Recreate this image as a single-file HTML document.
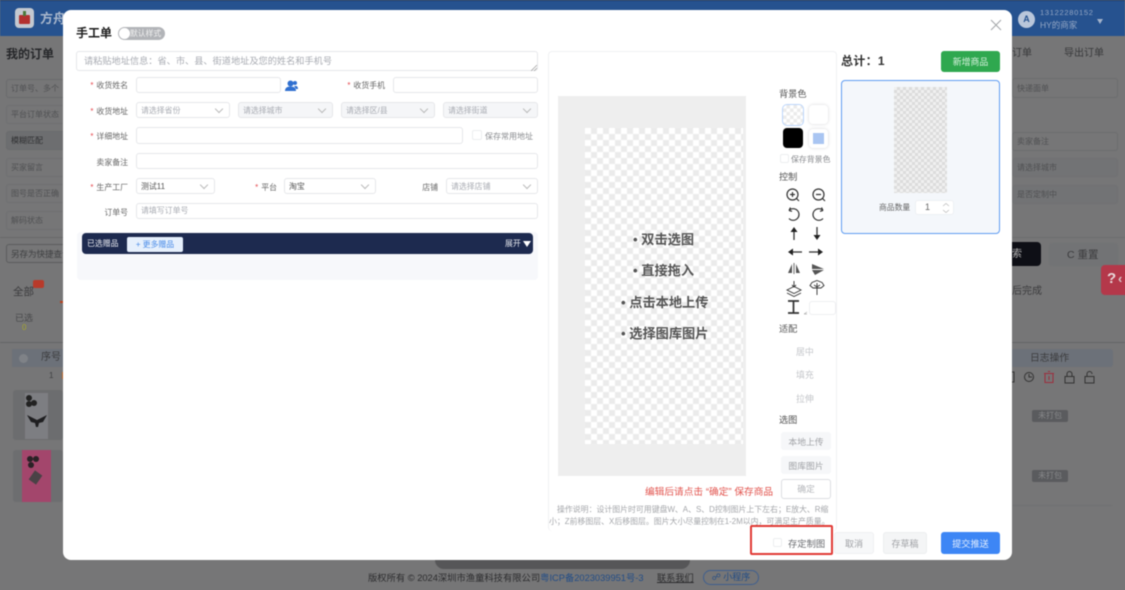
<!DOCTYPE html>
<html><head><meta charset="utf-8">
<style>
*{box-sizing:border-box}
html,body{margin:0;padding:0}
body{width:1125px;height:590px;overflow:hidden;position:relative;background:#767677;font-family:"Liberation Sans","Noto Sans CJK SC",sans-serif;color:#333}
#w{position:absolute;left:0;top:0;width:1125px;height:590px;filter:blur(.6px)}
.a,.t,.i,.s{position:absolute}
.t{white-space:nowrap;line-height:14px}
.bg{color:#3c3c3e}
.lbl{font-size:7.9px;color:#666;text-align:right;width:60px}
.lbl b{color:#e5484d;font-weight:400;margin-right:3px}
.i{border:1px solid #e6e7ea;border-radius:3px;background:#fff;font-size:7.9px;color:#a8abb2;padding-left:4px;line-height:14px;display:flex;align-items:center;white-space:nowrap}
.s{border:1px solid #e6e7ea;border-radius:3px;background:#fff;font-size:7.9px;color:#a8abb2;padding-left:4px;height:16px;display:flex;align-items:center;white-space:nowrap}
.s.dis{background:#f5f6f8}
.s:after{content:"";position:absolute;right:7px;top:3px;width:5px;height:5px;border-right:1px solid #bbb;border-bottom:1px solid #bbb;transform:rotate(45deg)}
.dk{border:1px solid #6a6b6d;border-radius:3px;position:absolute;font-size:8px;color:#505153;padding-left:4px;display:flex;align-items:center;white-space:nowrap;overflow:hidden}
.chk{background-color:#fff;background-image:linear-gradient(45deg,#ebebeb 25%,transparent 25%,transparent 75%,#ebebeb 75%),linear-gradient(45deg,#ebebeb 25%,transparent 25%,transparent 75%,#ebebeb 75%);background-size:12px 12px;background-position:0 0,6px 6px}
.btn{position:absolute;border-radius:3px;text-align:center;font-size:8.5px}
.gh{background:#f6f7f9;color:#a0a2a6}
.hint{font-size:13.2px;font-weight:700;color:#555}
</style></head><body><div id="w">

<!-- background page -->
<div class="a" style="left:0;top:0;width:1125px;height:36px;background:#26528f"></div>
<div class="a" style="left:0;top:0;width:1125px;height:1px;background:#1b3a6b"></div>
<div class="a" style="left:15px;top:8px;width:19px;height:20px;border-radius:4px;background:#c4c9d0"></div>
<div class="a" style="left:19px;top:15px;width:11px;height:9px;border-radius:1px;background:#b3312f"></div>
<div class="a" style="left:23px;top:11px;width:3px;height:5px;background:#4c7a3a"></div>
<div class="t" style="left:40px;top:12px;font-size:13px;font-weight:700;color:#a9b7cc">方舟</div>
<div class="a" style="left:1018px;top:11px;width:17px;height:17px;border-radius:50%;background:#b9c6da;color:#26528f;font-size:9px;font-weight:700;text-align:center;line-height:17px">A</div>
<div class="t" style="left:1040px;top:6px;font-size:7.5px;color:#93a6c4;letter-spacing:.7px">13122280152</div>
<div class="t" style="left:1040px;top:18px;font-size:8.5px;color:#93a6c4">HY的商家</div>
<div class="a" style="left:1097px;top:19px;width:0;height:0;border-left:3px solid transparent;border-right:3px solid transparent;border-top:5px solid #a3b3cb"></div>

<div class="t bg" style="left:6px;top:47px;font-size:12px;font-weight:700;color:#26272a">我的订单</div>
<div class="dk" style="left:6px;top:79px;width:60px;height:19px">订单号、多个</div>
<div class="dk" style="left:6px;top:105px;width:60px;height:19px;border-color:#6f7072">平台订单状态</div>
<div class="dk" style="left:6px;top:131px;width:60px;height:19px;background:#6d6e70;color:#2f3032">模糊匹配</div>
<div class="dk" style="left:6px;top:158px;width:60px;height:19px;border-color:#6f7072">买家留言</div>
<div class="dk" style="left:6px;top:184px;width:60px;height:19px;border-color:#6f7072">图号是否正确</div>
<div class="dk" style="left:6px;top:211px;width:60px;height:19px;border-color:#6f7072">解码状态</div>
<div class="a" style="left:0;top:237px;width:64px;height:1px;background:#68696b"></div>
<div class="dk" style="left:6px;top:244px;width:60px;height:19px;border-color:#5c5d5f;font-size:8.5px;color:#3f4042">另存为快捷查询</div>
<div class="t bg" style="left:13px;top:285px;font-size:10.5px">全部</div>
<div class="a" style="left:33px;top:280px;width:11px;height:8px;border-radius:2px;background:#b83a2a"></div>
<div class="a" style="left:60px;top:301px;width:4px;height:2px;background:#b8421f"></div>
<div class="t bg" style="left:15px;top:311px;font-size:9px;color:#48494b">已选</div>
<div class="t" style="left:22px;top:321px;font-size:8px;color:#a5a52f">0</div>
<div class="a" style="left:0;top:342px;width:64px;height:1px;background:#646567"></div>
<div class="a" style="left:12px;top:349px;width:52px;height:18px;background:#6c7179"></div>
<div class="a" style="left:19px;top:354px;width:9px;height:9px;border-radius:50%;background:#7f8287"></div>
<div class="t bg" style="left:41px;top:351px;font-size:10px">序号</div>
<div class="t" style="left:49px;top:369px;font-size:8px;color:#3f4042">1</div>
<div class="a" style="left:62px;top:372px;width:2px;height:7px;background:#b5642a"></div>
<div class="a" style="left:13px;top:390px;width:50px;height:50px;border-radius:3px;background:#6c6d6f"></div>
<div class="a" style="left:25px;top:393px;width:23px;height:46px;background:#7d7e82"></div>
<div class="a" style="left:26px;top:395px;width:6px;height:6px;border-radius:50%;background:#222"></div>
<div class="a" style="left:31px;top:400px;width:6px;height:6px;border-radius:50%;background:#222"></div>
<div class="a" style="left:26px;top:401px;width:6px;height:6px;border-radius:50%;background:#222"></div>
<svg class="a" style="left:27px;top:414px" width="20" height="14" fill="#1f1f21"><path d="M0 1l10 5 10-5-4 7-4 1-1 4-2 0-1-4-4-1z"/></svg>
<div class="a" style="left:13px;top:450px;width:50px;height:52px;border-radius:3px;background:#6d6e70"></div>
<div class="a" style="left:22px;top:450px;width:29px;height:52px;background:#a3466c"></div>
<div class="a" style="left:27px;top:456px;width:6px;height:6px;border-radius:50%;background:#2a2226"></div>
<div class="a" style="left:33px;top:456px;width:6px;height:6px;border-radius:50%;background:#2a2226"></div>
<div class="a" style="left:28px;top:462px;width:6px;height:6px;border-radius:50%;background:#2a2226"></div>
<div class="a" style="left:31px;top:472px;width:9px;height:11px;background:#4a4246;transform:rotate(35deg)"></div>

<div class="t bg" style="left:1012px;top:47px;font-size:10px;color:#38393b">订单</div>
<div class="t bg" style="left:1064px;top:47px;font-size:10px;color:#38393b">导出订单</div>
<div class="dk" style="left:1012px;top:78px;width:106px;height:20px;border-color:#6c6d6f">快递面单</div>
<div class="dk" style="left:1012px;top:132px;width:106px;height:19px;border-color:#6c6d6f">卖家备注</div>
<div class="dk" style="left:1012px;top:158px;width:106px;height:19px;border-color:#707173;background:#727375">请选择城市</div>
<div class="dk" style="left:1012px;top:185px;width:106px;height:19px;border-color:#707173;background:#727375">是否定制中</div>
<div class="a" style="left:1012px;top:237px;width:113px;height:1px;background:#6c6d6f"></div>
<div class="a" style="left:1012px;top:242px;width:29px;height:24px;background:#0e0f16;border-radius:0 4px 4px 0"></div>
<div class="t" style="left:1012px;top:248px;font-size:10px;color:#b5b5b5">索</div>
<div class="a" style="left:1049px;top:243px;width:69px;height:23px;background:#727375;border-radius:3px"></div>
<div class="t bg" style="left:1067px;top:248px;font-size:10.5px">C 重置</div>
<div class="a" style="left:1101px;top:265px;width:30px;height:30px;border-radius:4px;background:#b4384a"></div>
<div class="t" style="left:1107px;top:272px;font-size:15px;font-weight:700;color:#e8d8da">?</div>
<div class="t" style="left:1118px;top:272px;font-size:13px;font-weight:700;color:#d8c8ca">‹</div>
<div class="t bg" style="left:1012px;top:285px;font-size:10px">后完成</div>
<div class="a" style="left:1012px;top:342px;width:113px;height:1px;background:#646567"></div>
<div class="a" style="left:1012px;top:349px;width:101px;height:18px;background:#6c7179;border-radius:0 3px 3px 0"></div>
<div class="t bg" style="left:1030px;top:352px;font-size:9.8px">日志操作</div>
<svg class="a" style="left:1010px;top:370px" width="90" height="14" fill="none" stroke="#333" stroke-width="1">
<path d="M2 2h2v10h-2"/><circle cx="19" cy="7" r="4.500"/><path d="M19 4v3h3"/>
<path d="M35 3.500h8v9h-8zM34 3.500h10M38 1.500h2M39 6v4" stroke="#9c2e3e"/>
<path d="M55 6.500h9v6.500h-9zM57 6.500V4a2.500 2.500 0 0 1 5 0v2.500"/><path d="M75 6.500h9v6.500h-9zM77 6.500V4a2.500 2.500 0 0 1 5 0"/></svg>
<div class="a" style="left:1032px;top:410px;width:36px;height:12px;border-radius:2px;background:#5a5b5e;color:#868789;font-size:8px;text-align:center;line-height:12px">未打包</div>
<div class="a" style="left:1032px;top:470px;width:36px;height:12px;border-radius:2px;background:#5a5b5e;color:#868789;font-size:8px;text-align:center;line-height:12px">未打包</div>
<div class="a" style="left:1012px;top:505px;width:100px;height:1px;background:#707173"></div>
<div class="a" style="left:435px;top:560px;width:255px;height:9px;border-radius:0 0 9px 9px;background:#565658"></div>
<div class="t" style="left:368px;top:571px;font-size:9.300px;color:#2c2c2e">版权所有 © 2024深圳市渔童科技有限公司<span style="color:#234d86">粤ICP备2023039951号-3</span></div>
<div class="t" style="left:657px;top:571px;font-size:9.200px;color:#2c2c2e;text-decoration:underline">联系我们</div>
<div class="a" style="left:703px;top:570px;width:56px;height:15px;border:1px solid #3f5f8f;border-radius:8px;color:#234d86;font-size:9px;text-align:center;line-height:13px">&#9741; 小程序</div>

<!-- modal -->
<div class="a" style="left:63px;top:10px;width:949px;height:550px;background:#fff;border-radius:8px"></div>

<div class="t" style="left:76px;top:26px;font-size:12px;font-weight:700;color:#1f1f1f">手工单</div>
<div class="a" style="left:118px;top:27px;width:47px;height:13px;border-radius:7px;background:#b2b4b8"></div>
<div class="a" style="left:119px;top:28px;width:11px;height:11px;border-radius:50%;background:#fff"></div>
<div class="t" style="left:130px;top:27px;font-size:7.800px;color:#f2f2f2">默认样式</div>
<svg class="a" style="left:990px;top:19px" width="12" height="12" stroke="#a4a6aa" stroke-width="1"><path d="M1 1l10 10M11 1L1 11"/></svg>

<div class="i" style="left:76px;top:51px;width:462px;height:20px;font-size:9.200px;padding-left:7px">请粘贴地址信息：省、市、县、街道地址及您的姓名和手机号</div>
<svg class="a" style="left:531px;top:65px" width="6" height="6" stroke="#999" stroke-width=".7"><path d="M0 6L6 0M3 6l3-3"/></svg>

<div class="t lbl" style="left:68px;top:79px"><b>*</b>收货姓名</div>
<div class="i" style="left:136px;top:77px;width:145px;height:16px"></div>
<svg class="a" style="left:285px;top:80px" width="13" height="12" fill="#2f6fd0"><circle cx="5.500" cy="3.500" r="3"/><circle cx="10" cy="3" r="2"/><path d="M0 11c0-3 2-4.500 5.500-4.500S11 8 11 11z"/><path d="M9 6h2.500c1 .5 1.500 1.500 1.500 3h-2z"/></svg>
<div class="t lbl" style="left:325px;top:79px"><b>*</b>收货手机</div>
<div class="i" style="left:393px;top:77px;width:145px;height:16px"></div>

<div class="t lbl" style="left:68px;top:105px"><b>*</b>收货地址</div>
<div class="s" style="left:136px;top:102px;width:94px">请选择省份</div>
<div class="s dis" style="left:238px;top:102px;width:95px">请选择城市</div>
<div class="s dis" style="left:341px;top:102px;width:94px">请选择区/县</div>
<div class="s dis" style="left:443px;top:102px;width:95px">请选择街道</div>

<div class="t lbl" style="left:68px;top:130px"><b>*</b>详细地址</div>
<div class="i" style="left:136px;top:127px;width:327px;height:17px"></div>
<div class="a" style="left:472px;top:130px;width:10px;height:10px;border:1px solid #eceef0;border-radius:2px"></div>
<div class="t" style="left:485px;top:130px;font-size:8px;color:#8a8c90">保存常用地址</div>

<div class="t lbl" style="left:68px;top:156px">卖家备注</div>
<div class="i" style="left:136px;top:153px;width:402px;height:16px"></div>

<div class="t lbl" style="left:68px;top:181px"><b>*</b>生产工厂</div>
<div class="s" style="left:136px;top:178px;width:79px;color:#555">测试11</div>
<div class="t lbl" style="left:217px;top:181px"><b>*</b>平台</div>
<div class="s" style="left:284px;top:178px;width:92px;color:#555">淘宝</div>
<div class="t lbl" style="left:378px;top:181px">店铺</div>
<div class="s" style="left:446px;top:178px;width:92px">请选择店铺</div>

<div class="t lbl" style="left:68px;top:206px">订单号</div>
<div class="i" style="left:136px;top:203px;width:402px;height:16px">请填写订单号</div>

<div class="a" style="left:77px;top:232px;width:461px;height:48px;background:#f7f8fb;border-radius:4px"></div>
<div class="a" style="left:82px;top:233px;width:451px;height:21px;background:#1d2a4f;border-radius:4px"></div>
<div class="t" style="left:87px;top:237px;font-size:7.900px;color:#e6e8ee">已选赠品</div>
<div class="a" style="left:127px;top:237px;width:56px;height:15px;background:#e6f0fc;border-radius:2px;color:#4a8ce8;font-size:7.900px;text-align:center;line-height:15px">+ 更多赠品</div>
<div class="t" style="left:505px;top:237px;font-size:7.900px;color:#e6e8ee">展开</div>
<div class="a" style="left:523px;top:241px;width:0;height:0;border-left:4px solid transparent;border-right:4px solid transparent;border-top:6px solid #fff"></div>

<!-- design panel -->
<div class="a" style="left:548px;top:51px;width:289px;height:480px;border:1px solid #f0f1f3;border-bottom:none;border-radius:4px"></div>
<div class="a" style="left:558px;top:96px;width:188px;height:380px;background:#eeeeee"></div>
<div class="a chk" style="left:585px;top:128px;width:158px;height:316px"></div>
<div class="t hint" style="left:633px;top:233px">• 双击选图</div>
<div class="t hint" style="left:633px;top:264px">• 直接拖入</div>
<div class="t hint" style="left:621px;top:296px">• 点击本地上传</div>
<div class="t hint" style="left:621px;top:327px">• 选择图库图片</div>

<div class="t" style="left:779px;top:87px;font-size:9.200px;color:#555">背景色</div>
<div class="a chk" style="left:783px;top:105px;width:20px;height:20px;border-radius:4px;box-shadow:0 0 0 1px #bcd6fb;background-size:7px 7px;background-position:0 0,3.500px 3.500px"></div>
<div class="a" style="left:809px;top:105px;width:19px;height:19px;border-radius:4px;background:#fff;box-shadow:0 0 3px #d5d5d8"></div>
<div class="a" style="left:783px;top:128px;width:20px;height:20px;border-radius:4px;background:#000"></div>
<div class="a" style="left:809px;top:129px;width:19px;height:19px;border-radius:4px;background:#fff;box-shadow:0 0 3px #d5d5d8"></div>
<div class="a" style="left:813px;top:133px;width:11px;height:11px;background:#a9c5f2"></div>
<div class="a" style="left:780px;top:154px;width:9px;height:9px;border:1px solid #edeef0;border-radius:2px"></div>
<div class="t" style="left:791px;top:153px;font-size:7.900px;color:#85878b">保存背景色</div>
<div class="t" style="left:779px;top:170px;font-size:9.200px;color:#555">控制</div>
<svg class="a" style="left:782px;top:185px" width="50" height="135" fill="none" stroke="#333" stroke-width="1.200">
<circle cx="10.500" cy="9.500" r="5.500"/><path d="M14.500 13.500l2.500 2.500M8 9.500h5M10.500 7v5"/>
<circle cx="36.500" cy="9.500" r="5.500"/><path d="M40.500 13.500l2.500 2.500M34 9.500h5"/>
<path d="M7 25.500a5.800 5.800 0 1 1 0 8M7 25.500l1.500-3M7 25.500l3 .8"/>
<path d="M41 25.500a5.800 5.800 0 1 0 0 8M41 25.500l-1.500-3M41 25.500l-3 .8"/>
<path d="M12 46v9" stroke-width="1.300"/><path d="M12 42l-3.500 5h7z" fill="#222" stroke="none"/>
<path d="M35 42v9" stroke-width="1.300"/><path d="M35 55l-3.500-5h7z" fill="#222" stroke="none"/>
<path d="M10 67h10" stroke-width="1.300"/><path d="M6 67l5-3.500v7z" fill="#222" stroke="none"/>
<path d="M27 67h10" stroke-width="1.300"/><path d="M41 67l-5-3.500v7z" fill="#222" stroke="none"/>
<path d="M10 79l-4 9h4zM14 79l4 9h-4z" fill="#555" stroke="none"/><path d="M12 78v11" stroke-width=".7"/>
<path d="M30 79l12 5H30zM30 85h12l-9 5z" fill="#555" stroke="none"/>
<path d="M12 96v6M10 100l2 2 2-2M5 105l7-3.500 7 3.500-7 3.500zM5 108l7 3.500 7-3.500" stroke-width=".9"/>
<path d="M35 95.500l5 2 2 3-3 2.500h-8l-3-2.500 2-3zM35 98v12M32 100l3 2 3-2" stroke-width=".9"/>
<path d="M6 116h11M11.500 116v12M6 128h11" stroke-width="1.700"/>
<path d="M25 127l-3 2M22 129h3" stroke="#aaa" stroke-width=".7"/></svg>
<div class="a" style="left:809px;top:301px;width:27px;height:14px;border:1px solid #eeeff1;border-radius:3px;background:#fff"></div>

<div class="t" style="left:779px;top:322px;font-size:9.200px;color:#555">适配</div>
<div class="t" style="left:796px;top:345px;font-size:8.900px;color:#c4c6ca">居中</div>
<div class="t" style="left:796px;top:368px;font-size:8.900px;color:#c4c6ca">填充</div>
<div class="t" style="left:796px;top:392px;font-size:8.900px;color:#c4c6ca">拉伸</div>
<div class="t" style="left:779px;top:413px;font-size:9.200px;color:#555">选图</div>
<div class="btn gh" style="left:781px;top:432px;width:50px;height:18px;line-height:20px;font-size:8.800px">本地上传</div>
<div class="btn gh" style="left:781px;top:456px;width:50px;height:18px;line-height:20px;font-size:8.800px">图库图片</div>
<div class="btn" style="left:781px;top:479px;width:50px;height:20px;line-height:19px;border:1px solid #dcdee2;color:#b5b7bb;font-size:8.800px">确定</div>
<div class="t" style="left:645px;top:486px;font-size:9.700px;color:#e2554f">编辑后请点击 “确定” 保存商品</div>
<div class="t" style="left:557px;top:503px;font-size:7.900px;color:#a4a6aa">操作说明：设计图片时可用键盘W、A、S、D控制图片上下左右；E放大、R缩</div>
<div class="t" style="left:549px;top:515px;font-size:7.900px;color:#a4a6aa">小；Z前移图层、X后移图层。图片大小尽量控制在1-2M以内，可满足生产质量。</div>

<!-- right panel -->
<div class="t" style="left:841px;top:54px;font-size:12px;font-weight:700;color:#333;letter-spacing:.3px">总计：1</div>
<div class="btn" style="left:941px;top:51px;width:59px;height:21px;line-height:22px;background:#2fa84f;color:#d8f2df;font-size:8.900px">新增商品</div>
<div class="a" style="left:841px;top:80px;width:159px;height:154px;background:#f4f7fb;border:1.500px solid #5f9cf2;border-radius:4px"></div>
<div class="a chk" style="left:894px;top:87px;width:53px;height:106px;background-color:#f0f0f0;background-image:linear-gradient(45deg,#dcdcdc 25%,transparent 25%,transparent 75%,#dcdcdc 75%),linear-gradient(45deg,#dcdcdc 25%,transparent 25%,transparent 75%,#dcdcdc 75%);background-size:6px 6px;background-position:0 0,3px 3px"></div>
<div class="t" style="left:879px;top:201px;font-size:7.800px;color:#666">商品数量</div>
<div class="a" style="left:915px;top:200px;width:39px;height:15px;background:#fff;border:1px solid #eef0f3;border-radius:3px;font-size:9px;color:#666;padding-left:9px;line-height:13px">1</div>
<svg class="a" style="left:941px;top:202px" width="10" height="12" stroke="#bbb" stroke-width=".7" fill="none"><path d="M2 4l3-2.500 3 2.500M2 8l3 2.500 3-2.500"/></svg>

<!-- footer buttons -->
<div class="a" style="left:750px;top:525px;width:83px;height:30px;border:2px solid #e13a35;border-radius:2px"></div>
<div class="a" style="left:773px;top:538px;width:9px;height:9px;border:1px solid #edeef0;border-radius:2px"></div>
<div class="t" style="left:788px;top:537px;font-size:9.300px;color:#6a6c70">存定制图</div>
<div class="btn" style="left:834px;top:532px;width:40px;height:22px;line-height:22px;background:#f7f8f9;border:1px solid #eff0f2;color:#a0a2a6;font-size:9px">取消</div>
<div class="btn" style="left:883px;top:532px;width:44px;height:22px;line-height:22px;background:#f4f5f6;border:1px solid #eceef0;color:#a0a2a6;font-size:9px">存草稿</div>
<div class="btn" style="left:941px;top:532px;width:59px;height:22px;line-height:24px;background:#3d86f5;color:#e2edfd;font-size:9.200px">提交推送</div>
</div></body></html>
